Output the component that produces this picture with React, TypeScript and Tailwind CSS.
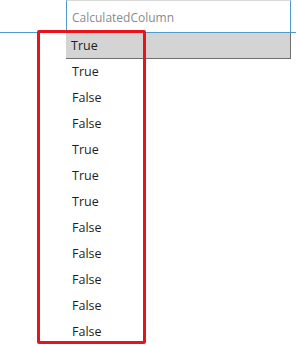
import React from "react";

const values = [
  "True",
  "True",
  "False",
  "False",
  "True",
  "True",
  "True",
  "False",
  "False",
  "False",
  "False",
  "False",
];

export default function App() {
  return (
    <div
      className="relative w-[296px] h-[346px] overflow-hidden bg-white"
      style={{ fontFamily: '"Open Sans", "Noto Sans", sans-serif' }}
    >
      {/* column header */}
      <div className="flex h-[33px] border-b border-[#4f9ccb]">
        <div className="w-[66px]" />
        <div className="flex w-[225px] items-center border-l border-r border-t border-[#4f9ccb] border-t-[#d9d9d9] pl-[5px] pt-[3px] text-[12px] text-[#8a8a8a]">
          CalculatedColumn
        </div>
      </div>

      {/* cells */}
      <div className="ml-[66px] flex w-[225px] flex-col">
        {values.map((v, i) => (
          <div
            key={i}
            className={
              i === 0
                ? "flex h-[26px] items-center border-r border-b border-[#6f6f6f] bg-[#d4d4d4] pl-[5px] pt-[2px] text-[12.5px] text-[#1e1e1e]"
                : "flex h-[26px] items-center pl-[6px] pt-[1px] text-[12.5px] text-[#1e1e1e]"
            }
          >
            {v}
          </div>
        ))}
      </div>

      {/* highlight outline */}
      <div className="absolute left-[37px] top-[30px] h-[314px] w-[109px] rounded-[2px] border-[3px] border-[#e8141b]" />
    </div>
  );
}
